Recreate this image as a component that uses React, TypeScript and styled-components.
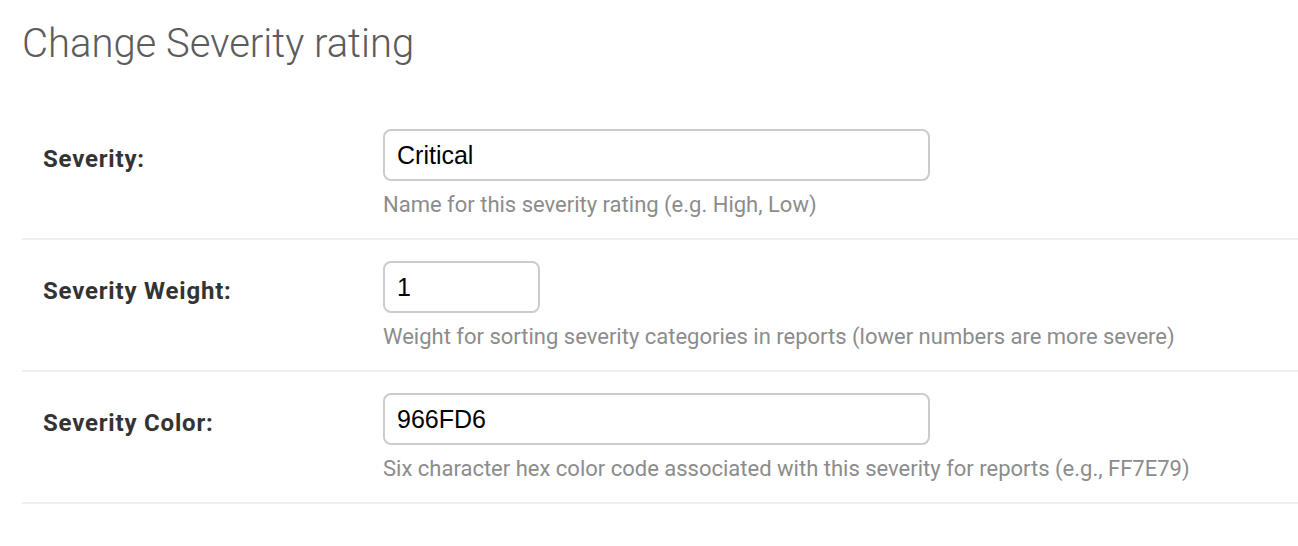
import { FC } from "react";
import styled, { createGlobalStyle } from "styled-components";

interface IField {
  label: string;
  value: string;
  help: string;
  narrow?: boolean;
}

const fields: IField[] = [
  {
    label: "Severity:",
    value: "Critical",
    help: "Name for this severity rating (e.g. High, Low)",
  },
  {
    label: "Severity Weight:",
    value: "1",
    help: "Weight for sorting severity categories in reports (lower numbers are more severe)",
    narrow: true,
  },
  {
    label: "Severity Color:",
    value: "966FD6",
    help: "Six character hex color code associated with this severity for reports (e.g., FF7E79)",
  },
];

const FormRow: FC<IField> = ({ label, value, help, narrow }) => (
  <StyledRow>
    <StyledLabel>{label}</StyledLabel>
    <StyledField>
      <StyledInput defaultValue={value} $narrow={narrow} />
      <StyledHelp>{help}</StyledHelp>
    </StyledField>
  </StyledRow>
);

const App: FC = () => (
  <>
    <GlobalStyle />
    <StyledPage>
      <StyledTitle>Change Severity rating</StyledTitle>
      <StyledFieldset>
        {fields.map((field) => (
          <FormRow key={field.label} {...field} />
        ))}
      </StyledFieldset>
    </StyledPage>
  </>
);

const GlobalStyle = createGlobalStyle`
  body {
    margin: 0;
    background: #fff;
    font-family: Roboto, "Liberation Sans", sans-serif;
  }
`;

const StyledPage = styled.div`
  padding: 20px 0 0 22px;
`;

const StyledTitle = styled.h1`
  margin: 0 0 40px 0;
  font-size: 40px;
  line-height: 48px;
  font-weight: 300;
  color: #5c5c5c;
`;

const StyledFieldset = styled.div`
  display: flex;
  flex-direction: column;
`;

const StyledRow = styled.div`
  display: flex;
  padding: 21px 0 20px 21px;
  border-bottom: 2px solid #eeeeee;
`;

const StyledLabel = styled.label`
  width: 340px;
  flex-shrink: 0;
  margin-top: 16px;
  font-size: 24px;
  line-height: 28px;
  letter-spacing: 0.8px;
  font-weight: 700;
  color: #333;
`;

const StyledField = styled.div`
  display: flex;
  flex-direction: column;
  align-items: flex-start;
`;

const StyledInput = styled.input<{ $narrow?: boolean }>`
  box-sizing: border-box;
  width: ${({ $narrow }) => ($narrow ? "157px" : "547px")};
  height: 52px;
  padding: 0 12px;
  border: 2px solid #cccccc;
  border-radius: 8px;
  font-family: "Liberation Sans", Arial, sans-serif;
  font-size: 25px;
  color: #000;
  outline: none;
`;

const StyledHelp = styled.div`
  margin-top: 11px;
  font-size: 22px;
  line-height: 26px;
  color: #8c8c8c;
`;

export default App;
